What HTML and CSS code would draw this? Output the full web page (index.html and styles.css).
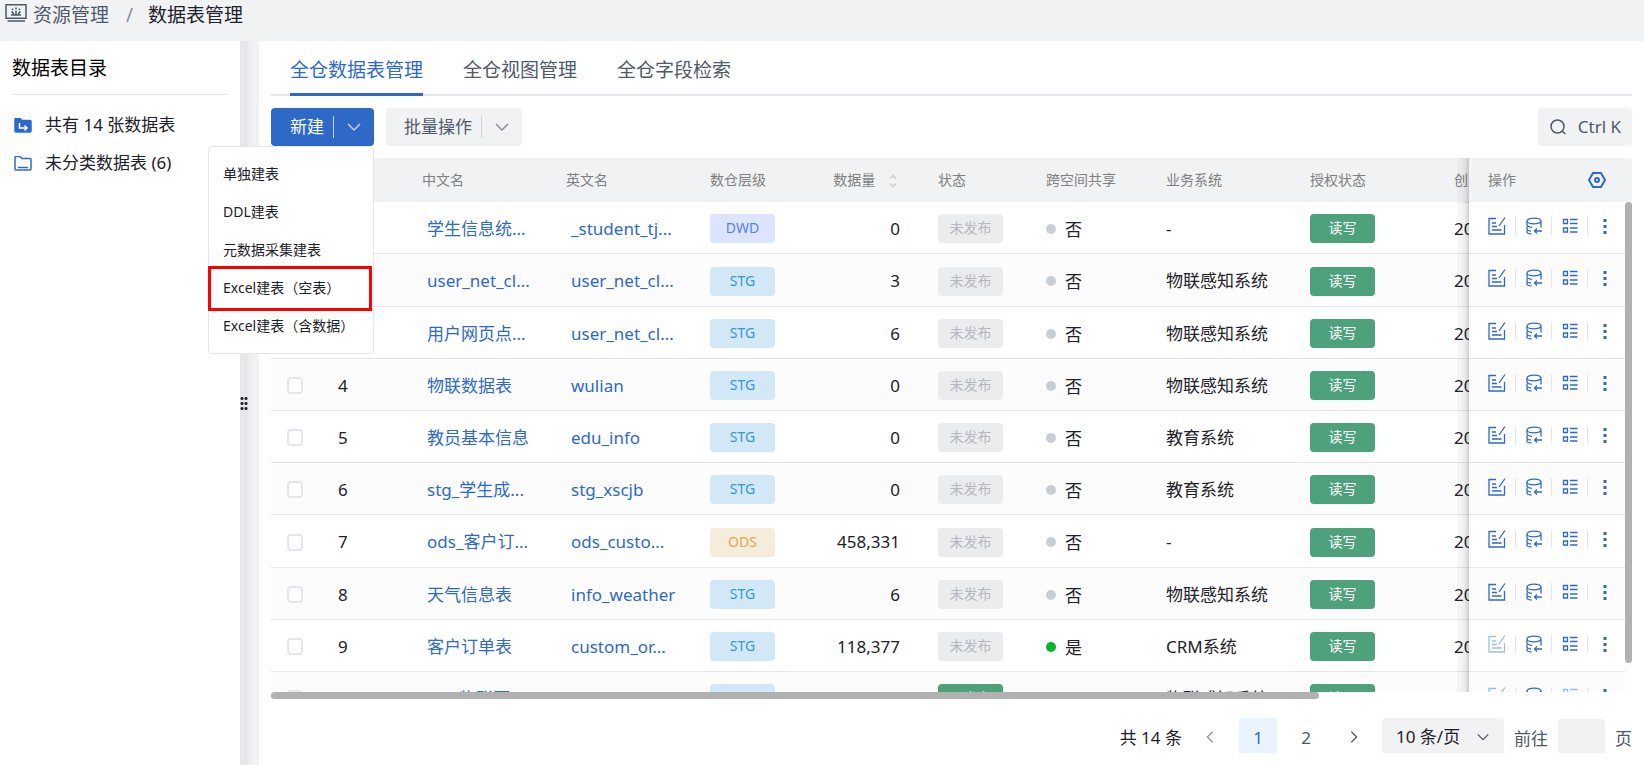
FILE: index.html
```html
<!DOCTYPE html>
<html lang="zh-CN">
  <head>
    <meta charset="UTF-8" />
    <meta name="viewport" content="width=device-width, initial-scale=1.0" />
    <title>数据表管理</title>
    <link rel="stylesheet" href="styles.css" />
  </head>
  <body>
    <svg class="sprite" aria-hidden="true">
      <symbol id="i-chevron" viewBox="0 0 16 16"><path d="M2 5l6 6 6-6" /></symbol>
      <symbol id="i-edit" viewBox="0 0 18 18">
        <path d="M8 1.500H1v15.500h15.500V8M17 .5l-6 8.500M4 6h4M4 9.500h5M4 13h9.500" />
      </symbol>
      <symbol id="i-db" viewBox="0 0 16 18">
        <path d="M1 4C1 .2 15 .2 15 4S1 7.800 1 4V7.500M15 4V10.500M1 7.500c0 1.500 1.500 2.500 5 2.800M1 9.500V12c0 1 1 1.800 4 2M1 13.500V15c0 1 1 1.800 4.500 2M16 14H8.500M11 11.500L8.500 14l2.500 2.500" />
      </symbol>
      <symbol id="i-list" viewBox="0 0 16 16">
        <path d="M1.500 1.500h4v4h-4zM1.500 10h4v4h-4zM8 1.500h7.500M8 5.500h7.500M8 10h7.500M8 14h7.500" />
      </symbol>
      <symbol id="i-more" viewBox="0 0 4 18">
        <path d="M.5 2h3v3h-3zM.5 8h3v3h-3zM.5 14h3v3h-3z" />
      </symbol>
    </svg>

    <header class="crumbs">
      <svg class="crumb-icon" viewBox="0 0 22 18">
        <path d="M1 .8h20v13.400H1zM2.500 17h17.500M6 11h10M11 11V6.500M8.500 11C8.500 9 8 8 6.500 7.500M13.500 11c0-2 .5-3 2-3.500" />
        <path d="M11 3.500v2M7.500 4.500v1.500M14.500 4.500v1.500" />
      </svg>
      <a href="#">资源管理</a>
      <span class="slash">/</span>
      <span class="current">数据表管理</span>
    </header>

    <div class="layout">
      <aside class="sidebar">
        <h2>数据表目录</h2>
        <ul>
          <li>
            <svg class="folder full" viewBox="0 0 18 15">
              <path d="M1 1.500Q1 .5 2 .5h4l2 2h8q1 0 1 1V13q0 1-1 1H2q-1 0-1-1z" />
              <path class="mark" d="M5.500 5v5H13M10.500 7.500L13 10l-2.500 2.500" />
            </svg>
            <a href="#">共有 14 张数据表</a>
          </li>
          <li>
            <svg class="folder" viewBox="0 0 18 15">
              <path d="M1 1.500Q1 .5 2 .5h4l2 2h8q1 0 1 1V13q0 1-1 1H2q-1 0-1-1zM4 11.500h10" />
            </svg>
            <a href="#">未分类数据表 (6)</a>
          </li>
        </ul>
      </aside>

      <div class="splitter"><span class="grip"></span></div>

      <main>
        <nav class="tabs">
          <a href="#" class="active">全仓数据表管理</a>
          <a href="#">全仓视图管理</a>
          <a href="#">全仓字段检索</a>
        </nav>

        <div class="toolbar">
          <div class="split-button">
            <button class="primary" type="button">
              新建
              <span class="drop"><svg><use href="#i-chevron" /></svg></span>
            </button>
            <ul class="menu">
              <li><button type="button">单独建表</button></li>
              <li><button type="button">DDL建表</button></li>
              <li><button type="button">元数据采集建表</button></li>
              <li class="marked"><button type="button">Excel建表（空表）</button></li>
              <li><button type="button">Excel建表（含数据）</button></li>
            </ul>
          </div>
          <button type="button">
            批量操作
            <span class="drop"><svg><use href="#i-chevron" /></svg></span>
          </button>
          <button class="search" type="button">
            <svg viewBox="0 0 16 16"><circle cx="7.500" cy="7.500" r="6.500" /><path d="M12 12l3.500 3" /></svg>
            Ctrl K
          </button>
        </div>

        <section class="grid">
          <div class="scroller">
            <table>
              <colgroup>
                <col class="w-check" /><col class="w-index" /><col class="w-name" /><col class="w-name" />
                <col class="w-level" /><col class="w-count" /><col class="w-state" /><col class="w-share" />
                <col class="w-name" /><col class="w-name" /><col class="w-time" /><col class="w-ops" />
              </colgroup>
              <thead>
                <tr>
                  <th><input type="checkbox" aria-label="全选" /></th>
                  <th>序号</th>
                  <th>中文名</th>
                  <th>英文名</th>
                  <th>数仓层级</th>
                  <th class="count">
                    数据量
                    <svg class="sort" viewBox="0 0 8 14"><path d="M1 4.500L4 1.500l3 3M1 9.500l3 3 3-3" /></svg>
                  </th>
                  <th>状态</th>
                  <th>跨空间共享</th>
                  <th>业务系统</th>
                  <th>授权状态</th>
                  <th>创建时间</th>
                  <th class="ops">
                    <div>
                      操作
                      <svg class="gear" viewBox="0 0 18 16"><path d="M5 1h8l4 7-4 7H5L1 8z" /><circle cx="9" cy="8" r="2" /></svg>
                    </div>
                  </th>
                </tr>
              </thead>
              <tbody></tbody>
            </table>
          </div>
          <div class="track"><div class="thumb"></div></div>
          <div class="thumb-x"></div>
        </section>

        <footer class="pager">
          <span class="total">共 14 条</span>
          <button class="prev" type="button" aria-label="上一页"><svg><use href="#i-chevron" /></svg></button>
          <button class="page on" type="button">1</button>
          <button class="page" type="button">2</button>
          <button class="next" type="button" aria-label="下一页"><svg><use href="#i-chevron" /></svg></button>
          <div class="size">
            <select aria-label="每页条数">
              <option>10 条/页</option>
              <option>20 条/页</option>
            </select>
            <svg><use href="#i-chevron" /></svg>
          </div>
          <label>前往 <input type="text" /> 页</label>
        </footer>
      </main>
    </div>

    <template>
      <tr>
        <td><input type="checkbox" aria-label="选择" /></td>
        <td class="index"></td>
        <td><a href="#" class="cn"></a></td>
        <td><a href="#" class="en"></a></td>
        <td><span class="tag level"></span></td>
        <td class="count"></td>
        <td><span class="tag state"></span></td>
        <td><span class="share"></span></td>
        <td class="system"></td>
        <td><span class="tag green">读写</span></td>
        <td>2024-05-20 10:30</td>
        <td class="ops">
          <div>
            <button class="edit" type="button" aria-label="编辑"><svg><use href="#i-edit" /></svg></button>
            <button type="button" aria-label="数据"><svg><use href="#i-db" /></svg></button>
            <button class="detail" type="button" aria-label="详情"><svg><use href="#i-list" /></svg></button>
            <button class="more" type="button" aria-label="更多"><svg><use href="#i-more" /></svg></button>
          </div>
        </td>
      </tr>
    </template>

    <script src="script.js"></script>
  </body>
</html>
```
FILE: styles.css
```css
* {
  box-sizing: border-box;
  margin: 0;
  padding: 0;
}

body {
  display: flex;
  flex-direction: column;
  height: 100vh;
  overflow: hidden;
  background: #f1f2f4;
  color: #1d2129;
  font: 17px/24px "Noto Sans", "Noto Sans CJK SC", sans-serif;
}

a {
  color: inherit;
  text-decoration: none;
}

ul {
  list-style: none;
}

button,
input,
select {
  border: 0;
  background: none;
  color: inherit;
  font: inherit;
}

svg {
  flex: none;
  width: 16px;
  height: 16px;
  fill: none;
  stroke: currentColor;
  stroke-width: 1.5;
}

.sprite {
  position: absolute;
  width: 0;
  height: 0;
}

/* breadcrumb */
.crumbs {
  display: flex;
  height: 41px;
  padding: 1px 5px;
  color: #4e5969;
  font-size: 19px;
  line-height: 28px;
}

.crumb-icon {
  width: 22px;
  height: 18px;
  margin: 3px 6px 0 0;
}

.slash {
  margin: 0 15px 0 17px;
  color: #86909c;
}

.current {
  color: #1d2129;
}

.layout {
  display: flex;
  flex: 1;
  min-height: 0;
}

/* sidebar */
.sidebar {
  width: 240px;
  padding: 0 12px;
  background: #fff;
}

.sidebar h2 {
  height: 54px;
  margin-bottom: 11px;
  border-bottom: 1px solid #e5e6eb;
  color: #000;
  font-size: 19px;
  font-weight: 400;
  line-height: 54px;
}

.sidebar li {
  display: flex;
  align-items: center;
  gap: 13px;
  height: 38px;
  padding-left: 2px;
}

.folder {
  width: 18px;
  height: 15px;
  color: #2e69c8;
}

.full {
  fill: #2e69c8;
}

.full .mark {
  fill: none;
  stroke: #fff;
}

.splitter {
  display: flex;
  align-items: center;
  width: 19px;
  background: linear-gradient(90deg, #e5e6eb 7px, #ebecf0 8px, #f1f2f4 14px);
}

.grip {
  width: 8px;
  height: 15px;
  background: radial-gradient(circle, #1d2129 1px, transparent 2px) 0 0 / 4px 5px;
}

/* main */
main {
  display: flex;
  flex: 1;
  flex-direction: column;
  min-width: 0;
  padding: 0 12px;
  background: #fff;
}

.tabs {
  display: flex;
  gap: 40px;
  height: 55px;
  padding: 0 19px;
  border-bottom: 2px solid #e5e6eb;
  color: #4e5969;
  font-size: 19px;
  line-height: 58px;
}

.tabs a {
  height: 55px;
}

.tabs .active {
  border-bottom: 3px solid #2e69c8;
  color: #2e69c8;
}

.toolbar {
  display: flex;
  gap: 12px;
  height: 38px;
  margin: 12px 0;
}

.toolbar > button,
.primary {
  display: flex;
  align-items: center;
  height: 38px;
  padding: 0 12px 0 18px;
  border-radius: 4px;
  background: #f1f2f4;
  color: #4e5969;
}

.drop {
  display: flex;
  margin-left: 9px;
  padding: 3px 0 3px 12px;
  border-left: 1px solid #d0d3d9;
  color: #86909c;
}

.toolbar .primary {
  padding-left: 19px;
  background: #2e69c8;
  color: #fff;
}

.primary .drop {
  border-color: #c0d2ef;
  color: #c0d2ef;
}

.toolbar .search {
  gap: 12px;
  margin-left: auto;
  padding: 0 11px 0 12px;
}

.split-button {
  position: relative;
}

.menu {
  position: absolute;
  z-index: 5;
  top: 38px;
  right: 0;
  width: 166px;
  padding: 8px 0;
  border: 1px solid #e5e6eb;
  border-radius: 4px;
  background: #fff;
  font-size: 14px;
}

.menu button {
  display: block;
  width: 100%;
  height: 38px;
  padding-left: 14px;
  text-align: left;
  white-space: nowrap;
}

.marked {
  position: relative;
}

.marked::after {
  position: absolute;
  inset: -3px 1px -4px -1px;
  border: 3px solid #f00;
  content: "";
}

/* data grid */
.grid {
  position: relative;
  flex: 1;
  min-height: 0;
}

.scroller {
  height: 100%;
  overflow: hidden;
  border-radius: 4px 4px 0 0;
}

table {
  width: 1786px;
  border-collapse: separate;
  border-spacing: 0;
  table-layout: fixed;
}

.w-check { width: 53px; }
.w-index { width: 84px; }
.w-name { width: 144px; }
.w-level { width: 114px; }
.w-count { width: 114px; }
.w-state { width: 108px; }
.w-share { width: 120px; }
.w-time { width: 454px; }
.w-ops { width: 163px; }

th,
td {
  padding: 0 14px;
  text-align: left;
  white-space: nowrap;
}

th {
  height: 44px;
  background: #f1f2f4;
  color: #7f7f7f;
  font-size: 14px;
  font-weight: 400;
}

td {
  height: 52px;
  padding-top: 2px;
  border-bottom: 1px solid #e5e6eb;
  background: #fff;
}

tr:nth-child(even) td {
  background: #fcfcfc;
}

tr:nth-child(5n + 2) td {
  height: 53px;
}

td a {
  display: block;
  max-width: 116px;
  padding-left: 5px;
  overflow: hidden;
  color: #2e69c8;
  text-overflow: ellipsis;
}

input[type="checkbox"] {
  display: block;
  width: 16px;
  height: 17px;
  margin-left: 2px;
  border: 2px solid #e5e6eb;
  border-radius: 4px;
  background: #fff;
  appearance: none;
}

.count {
  padding-right: 24px;
  text-align: right;
}

th.count {
  padding-right: 27px;
}

.sort {
  width: 8px;
  height: 14px;
  margin-left: 10px;
  color: #c9cdd4;
  vertical-align: middle;
}

.tag {
  display: block;
  width: 65px;
  height: 29px;
  border-radius: 4px;
  background: #ebecee;
  color: #b3b8c0;
  font-size: 14px;
  line-height: 28px;
  text-align: center;
}

.dwd {
  background: #dde4ff;
  color: #5580f6;
}

.stg {
  background: #d2e8f7;
  color: #3296db;
}

.ods {
  background: #f6ecdc;
  color: #dda653;
}

.green {
  background: #4da27c;
  color: #fff;
}

.share {
  display: flex;
  align-items: center;
  gap: 9px;
  padding-top: 2px;
}

.share::before {
  width: 10px;
  height: 10px;
  margin-bottom: 2px;
  border-radius: 50%;
  background: #c9cdd4;
  content: "";
}

.share.yes::before {
  background: #0ab42f;
}

/* pinned column */
.ops {
  position: sticky;
  right: 0;
  padding: 0 26px 0 19px;
}

td.ops {
  padding-bottom: 4px;
}

.ops::before {
  position: absolute;
  top: 0;
  right: 100%;
  bottom: -1px;
  width: 12px;
  background: linear-gradient(90deg, rgba(0, 0, 0, 0.02), rgba(0, 0, 0, 0.06) 60%, rgba(0, 0, 0, 0.18));
  content: "";
}

.ops div {
  display: flex;
  align-items: center;
  gap: 10px;
}

.gear {
  width: 18px;
  height: 16px;
  margin-left: auto;
  color: #2e69c8;
  stroke-width: 2;
}

.ops button {
  display: flex;
  align-items: center;
  height: 18px;
  padding-right: 9px;
  border-right: 1px solid #e5e6eb;
  color: #2e69c8;
}

.ops button svg {
  height: 18px;
  stroke-width: 1.3;
}

.ops .edit svg {
  width: 18px;
}

.ops .more {
  margin-left: 5px;
  padding: 0;
  border: 0;
}

.ops .more svg {
  width: 4px;
  fill: currentColor;
  stroke: none;
}

.ops .off svg {
  opacity: 0.45;
}

.track {
  position: absolute;
  top: 44px;
  right: 0;
  bottom: 0;
  width: 7px;
  background: #fff;
}

.thumb {
  height: 94%;
  border-radius: 4px;
  background: #b1b1b1;
}

.thumb-x {
  position: absolute;
  top: 100%;
  left: 0;
  width: 77%;
  height: 7px;
  border-radius: 4px;
  background: #b1b1b1;
}

/* pagination */
.pager {
  display: flex;
  justify-content: flex-end;
  height: 61px;
  margin-bottom: 12px;
  padding-top: 26px;
  overflow: hidden;
  color: #4e5969;
  line-height: 40px;
}

.total {
  margin-right: 21px;
  color: #1d2129;
}

.pager button {
  height: 38px;
}

.pager svg {
  width: 14px;
  height: 14px;
}

.prev {
  margin-right: 22px;
  color: #86909c;
}

.prev svg {
  transform: rotate(90deg);
}

.next {
  margin: 0 21px 0 12px;
}

.next svg {
  transform: rotate(-90deg);
}

.page {
  width: 38px;
  margin-right: 10px;
  border-radius: 4px;
}

.on {
  background: #e8f4ff;
  color: #2e69c8;
}

.size {
  display: flex;
  align-items: center;
  height: 38px;
  margin-right: 10px;
  padding: 0 14px;
  border-radius: 4px;
  background: #f1f2f4;
}

.size select {
  width: 80px;
  color: #1d2129;
  appearance: none;
}

.pager label {
  display: flex;
  gap: 10px;
  line-height: 42px;
}

.pager label input {
  width: 47px;
  height: 38px;
  margin-top: 1px;
  border-radius: 4px;
  background: #f1f2f4;
}
```
FILE: script.js
```js
const rows = [
  ["学生信息统...", "_student_tj...", "DWD", "0", "未发布", "否", "-"],
  ["user_net_cl...", "user_net_cl...", "STG", "3", "未发布", "否", "物联感知系统"],
  ["用户网页点...", "user_net_cl...", "STG", "6", "未发布", "否", "物联感知系统"],
  ["物联数据表", "wulian", "STG", "0", "未发布", "否", "物联感知系统"],
  ["教员基本信息", "edu_info", "STG", "0", "未发布", "否", "教育系统"],
  ["stg_学生成...", "stg_xscjb", "STG", "0", "未发布", "否", "教育系统"],
  ["ods_客户订...", "ods_custo...", "ODS", "458,331", "未发布", "否", "-"],
  ["天气信息表", "info_weather", "STG", "6", "未发布", "否", "物联感知系统"],
  ["客户订单表", "custom_or...", "STG", "118,377", "未发布", "是", "CRM系统"],
  ["stg_物联网...", "wulian01", "STG", "8", "已发布", "否", "物联感知系统"],
];

const dest = document.querySelector("tbody");
const template = document.querySelector("template");

rows.forEach(([cn, en, level, count, state, share, system], i) => {
  const row = template.content.cloneNode(true);
  row.querySelector(".index").textContent = i + 1;
  row.querySelector(".cn").textContent = cn;
  row.querySelector(".en").textContent = en;
  row.querySelector(".level").textContent = level;
  row.querySelector(".level").classList.add(level.toLowerCase());
  row.querySelector(".count").textContent = count;
  row.querySelector(".state").textContent = state;
  row.querySelector(".share").textContent = share;
  row.querySelector(".system").textContent = system;
  if (state == "已发布") {
    row.querySelector(".state").classList.add("green");
    row.querySelector(".detail").classList.add("off");
  }
  if (share == "是") {
    row.querySelector(".share").classList.add("yes");
  }
  // the last two tables can not be edited
  if (i > 7) {
    row.querySelector(".edit").classList.add("off");
  }
  dest.appendChild(row);
});
```
